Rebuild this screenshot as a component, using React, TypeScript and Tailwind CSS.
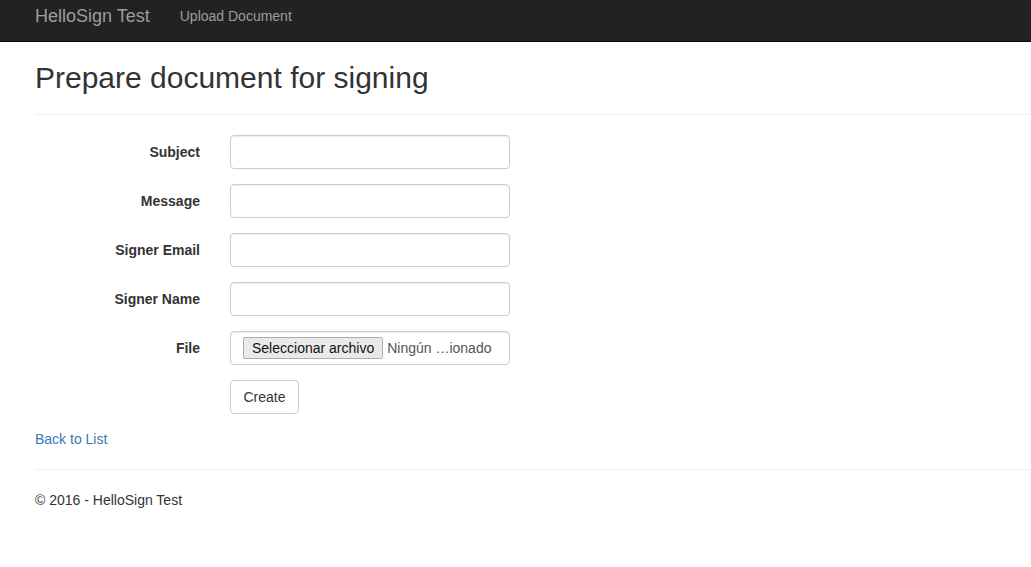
import React from "react";

const labels = ["Subject", "Message", "Signer Email", "Signer Name"];

export default function App() {
  return (
    <div className="min-h-[567px] bg-white text-[#333] text-[14px] leading-[20px]" style={{ fontFamily: '"Liberation Sans", Arial, sans-serif' }}>
      <nav className="h-[42px] bg-[#222] border-b border-[#080808] flex items-center pl-[35px]">
        <span className="text-[18px] leading-[20px] text-[#9d9d9d] mr-[30px] -mt-[10px]">HelloSign Test</span>
        <span className="text-[14px] leading-[20px] text-[#9d9d9d] -mt-[10px]">Upload Document</span>
      </nav>
      <div className="pl-[35px]">
        <h2 className="text-[30px] leading-[33px] font-normal mt-[19px] text-[#333]">Prepare document for signing</h2>
        <hr className="mt-[20px] mb-[20px] border-0 border-t border-[#eee]" />
        <div className="flex flex-col">
          {labels.map((l) => (
            <div key={l} className="flex mb-[15px]">
              <label className="w-[165px] text-right font-bold pt-[7px]">{l}</label>
              <div className="pl-[30px]">
                <div className="w-[280px] h-[34px] border border-[#ccc] rounded-[4px] shadow-[inset_0_1px_1px_rgba(0,0,0,0.075)]" />
              </div>
            </div>
          ))}
          <div className="flex mb-[15px]">
            <label className="w-[165px] text-right font-bold pt-[7px]">File</label>
            <div className="pl-[30px]">
              <div className="w-[280px] h-[34px] border border-[#ccc] rounded-[4px] flex items-center pl-[12px] shadow-[inset_0_1px_1px_rgba(0,0,0,0.075)]">
                <span className="h-[22px] px-[8px] bg-[#e9e9e9] border border-[#adadad] rounded-[2px] text-[14px] leading-[20px] text-[#111] flex items-center">Seleccionar archivo</span>
                <span className="ml-[4px] text-[14px] text-[#555]">Ningún …ionado</span>
              </div>
            </div>
          </div>
          <div className="flex mb-[15px]">
            <div className="w-[165px]" />
            <div className="pl-[30px]">
              <div className="h-[34px] w-[69px] border border-[#ccc] rounded-[4px] flex items-center justify-center text-[#333]">Create</div>
            </div>
          </div>
        </div>
        <div className="text-[#337ab7]">Back to List</div>
        <hr className="mt-[20px] mb-[20px] border-0 border-t border-[#eee]" />
        <p className="text-[#333]">© 2016 - HelloSign Test</p>
      </div>
    </div>
  );
}
